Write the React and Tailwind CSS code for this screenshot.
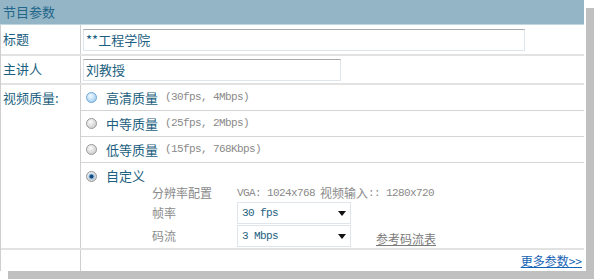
import React from "react";

const cjk = "font-['Noto_Sans_CJK_SC','Noto_Sans',sans-serif]";
const mono = "font-['Liberation_Mono','Noto_Sans_CJK_SC',monospace] tracking-[-0.6px]";

function Radio({ kind }) {
  // kind: "hover" | "off" | "on"
  return (
    <svg width="11" height="11" viewBox="0 0 11 11" className="shrink-0">
      <defs>
        <radialGradient id={"g-" + kind} cx="40%" cy="35%" r="70%">
          <stop offset="0%" stopColor={kind === "hover" ? "#f2f9ff" : "#fbfbfb"} />
          <stop offset="100%" stopColor={kind === "hover" ? "#9ccbef" : "#c9c9c9"} />
        </radialGradient>
      </defs>
      <circle
        cx="5.5"
        cy="5.5"
        r="5"
        fill={"url(#g-" + kind + ")"}
        stroke={kind === "hover" ? "#6ea6d4" : "#9a9a9a"}
        strokeWidth="1"
      />
      {kind === "on" && (
        <>
          <circle cx="5.5" cy="5.5" r="3" fill="#8fbfe3" />
          <circle cx="5.5" cy="5.5" r="2" fill="#1b4b7c" />
        </>
      )}
    </svg>
  );
}

function Option({ kind, name, spec, last }) {
  return (
    <div className={"h-[26px] flex items-center pl-[5px] border-b border-[#d4d4d4]" + (last ? "" : "")}>
      <Radio kind={kind} />
      <span className={`${cjk} text-[13px] text-[#1c5f80] ml-[9px]`}>{name}</span>
      <span className={`${mono} text-[11px] text-[#8a8a8a] ml-[7px]`}>{spec}</span>
    </div>
  );
}

function Select({ value }) {
  return (
    <div className="w-[114px] h-[22px] border border-[#dfe5ea] bg-white flex items-center justify-between pl-[4px] pr-[4px]">
      <span className={`${mono} text-[11px] text-[#1c5f80]`}>{value}</span>
      <svg width="8" height="5" viewBox="0 0 8 5">
        <path d="M0 0 H8 L4 5 Z" fill="#111" />
      </svg>
    </div>
  );
}

export default function App() {
  return (
    <div className="w-[594px] h-[279px] bg-white">
      <div className="w-[586px] h-[271px] bg-white shadow-[8px_8px_0_#c0c0c0]">
        {/* 标题栏 */}
        <div className="w-[584px] h-[25px] bg-[#93b5c5] border-b border-[#c4d6df] flex items-center pl-[3px]">
          <span className={`${cjk} text-[13px] text-[#22668a]`}>节目参数</span>
        </div>

        <div className="w-[584px] border-l border-[#cfcfcf]">
          {/* 标题 */}
          <div className="flex h-[31px] border-b-2 border-[#e2e2e2]">
            <div className={`${cjk} w-[80px] border-r border-[#cfcfcf] pl-[2px] pt-[4px] text-[13px] text-[#1c5f80]`}>
              标题
            </div>
            <div className="pl-[2px] pt-[4px]">
              <div className={`${cjk} w-[442px] h-[22px] border border-[#dfe6eb] border-t-[#a9a9a9] flex items-center pl-[2px] text-[13px] text-[#1c5f80]`}>
                **工程学院
              </div>
            </div>
          </div>

          {/* 主讲人 */}
          <div className="flex h-[29px] border-b-2 border-[#e2e2e2]">
            <div className={`${cjk} w-[80px] border-r border-[#cfcfcf] pl-[2px] pt-[3px] text-[13px] text-[#1c5f80]`}>
              主讲人
            </div>
            <div className="pl-[2px] pt-[3px]">
              <div className={`${cjk} w-[258px] h-[22px] border border-[#dfe6eb] border-t-[#a9a9a9] flex items-center pl-[2px] text-[13px] text-[#1c5f80]`}>
                刘教授
              </div>
            </div>
          </div>

          {/* 视频质量 */}
          <div className="flex border-b-2 border-[#e2e2e2]">
            <div className={`${cjk} w-[80px] shrink-0 border-r border-[#cfcfcf] pl-[2px] pt-[3px] text-[13px] text-[#1c5f80]`}>
              视频质量:
            </div>
            <div className="flex-1">
              <Option kind="hover" name="高清质量" spec="(30fps, 4Mbps)" />
              <Option kind="off" name="中等质量" spec="(25fps, 2Mbps)" />
              <Option kind="off" name="低等质量" spec="(15fps, 768Kbps)" />

              {/* 自定义 */}
              <div className="pb-px">
                <div className="h-[22px] pt-[4px] flex items-center pl-[5px]">
                  <Radio kind="on" />
                  <span className={`${cjk} text-[13px] text-[#1c5f80] ml-[9px]`}>自定义</span>
                </div>
                <div className="ml-[71px] grid grid-cols-[85px_auto] gap-y-[1px] items-center">
                  <span className={`${cjk} h-[16px] flex items-center text-[12px] text-[#8a8a8a]`}>分辨率配置</span>
                  <span className="h-[16px] flex items-center text-[11px] text-[#8a8a8a]">
                    <span className={mono}>VGA: 1024x768 </span>
                    <span className={`${cjk} text-[12px] ml-[5px]`}>视频输入</span>
                    <span className={mono}>:: 1280x720</span>
                  </span>

                  <span className={`${cjk} text-[12px] text-[#8a8a8a]`}>帧率</span>
                  <Select value="30 fps" />

                  <span className={`${cjk} text-[12px] text-[#8a8a8a]`}>码流</span>
                  <div className="flex items-end">
                    <Select value="3 Mbps" />
                    <span className={`${cjk} ml-[25px] text-[12px] text-[#7a7a7a] underline leading-[16px]`}>参考码流表</span>
                  </div>
                </div>
              </div>
            </div>
          </div>

          {/* 更多参数 */}
          <div className="flex h-[21px]">
            <div className="w-[80px] border-r border-[#cfcfcf]" />
            <div className="flex-1 flex items-center justify-end pr-[2px]">
              <span className={`${cjk} text-[12px] text-[#1462b4] underline`}>更多参数&gt;&gt;</span>
            </div>
          </div>
        </div>
      </div>
    </div>
  );
}
